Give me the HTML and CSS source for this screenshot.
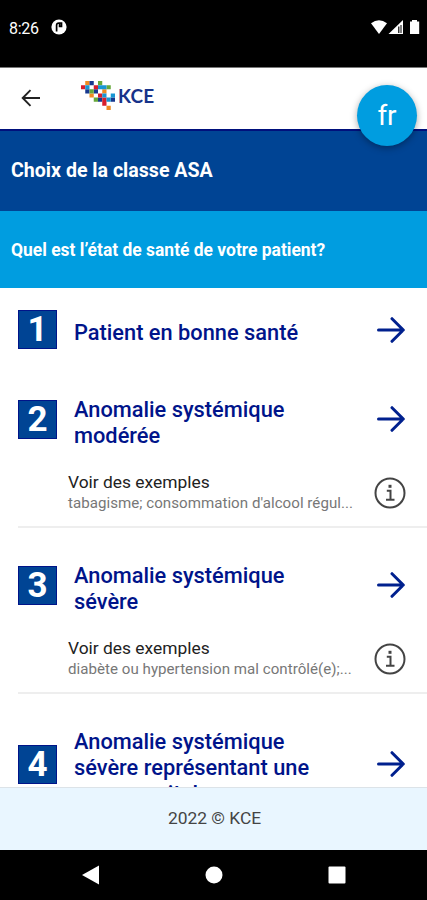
FILE: index.html
```html
<!DOCTYPE html>
<html lang="fr">
<head>
<meta charset="utf-8">
<title>KCE</title>
<link rel="stylesheet" href="styles.css">
</head>
<body>
<div class="status">
  <span class="time">8:26</span>
  <svg class="notif" width="16" height="16" viewBox="0 0 16 16"><circle cx="8" cy="8" r="7.600" fill="#fff"/><path d="M5.600 12.500V6.200Q5.600 4 8 4H10.500V7.300H8.600V3.500" fill="none" stroke="#000" stroke-width="1.700"/></svg>
  <svg class="signals" width="49" height="15" viewBox="0 0 49 15"><path d="M0 3.200Q8 -2.600 16 3.200L8 14Z" fill="#fff"/><path d="M17.500 14L32 0V14Z" fill="#fff"/><path d="M27.200 6.500h1.200V13h-1.200zM29.500 5h1V13h-1z" fill="#000"/><path d="M41 0h5v1.500h2.200V14H39V1.500h2z" fill="#fff"/></svg>
</div>
<header class="bar">
  <svg class="back" width="20" height="18" viewBox="0 0 20 18"><path d="M19 9H2M9.500 1.200L1.700 9L9.500 16.800" fill="none" stroke="#222" stroke-width="1.900"/></svg>
  <svg class="mosaic" width="34" height="29" viewBox="0 0 8 7" preserveAspectRatio="none">
    <path fill="#ef8b22" d="M1 0h1v1h-1zM5 2h1v1h-1zM2 3h1v1h-1zM6 6h1v1h-1z"/>
    <path fill="#17388f" d="M2 0h1v1h-1zM1 2h1v1h-1zM3 2h1v1h-1zM4 4h1v1h-1zM7 4h1v1h-1z"/>
    <path fill="#66a83a" d="M4 0h1v1h-1zM6 1h1v1h-1zM2 2h1v1h-1zM3 4h1v1h-1z"/>
    <path fill="#d61f2c" d="M0 1h1v1h-1zM3 1h1v1h-1zM4 3h1v1h-1zM5 4h1v1h-1zM5 5h1v1h-1z"/>
    <path fill="#1796d4" d="M1 1h1v1h-1zM4 1h2v1h-2zM5 3h1v1h-1zM7 3h1v1h-1zM6 4h1v1h-1z"/>
  </svg>
  <span class="brand">KCE</span>
  <button class="lang">fr</button>
</header>
<h1 class="title">Choix de la classe ASA</h1>
<h2 class="question">Quel est l’état de santé de votre patient?</h2>
<main class="list">
  <section class="choice single">
    <span class="num">1</span><h3>Patient en bonne santé</h3>
    <svg class="arrow" viewBox="0 0 28 26"><path d="M1.500 13H26M15 1.700L26.300 13L15 24.300"/></svg>
  </section>
  <section class="choice">
    <span class="num">2</span><h3>Anomalie systémique modérée</h3>
    <svg class="arrow" viewBox="0 0 28 26"><path d="M1.500 13H26M15 1.700L26.300 13L15 24.300"/></svg>
  </section>
  <section class="examples">
    <div class="text"><p class="see">Voir des exemples</p><p class="detail">tabagisme; consommation d'alcool régul...</p></div>
    <svg class="info" viewBox="0 0 32 32"><circle cx="16" cy="16" r="14.500"/><path d="M12.800 13.700H16.500V22.500M12 22.800H20.500"/><path class="dot" d="M14.500 7.800h3v3h-3z"/></svg>
  </section>
  <section class="choice">
    <span class="num">3</span><h3>Anomalie systémique sévère</h3>
    <svg class="arrow" viewBox="0 0 28 26"><path d="M1.500 13H26M15 1.700L26.300 13L15 24.300"/></svg>
  </section>
  <section class="examples">
    <div class="text"><p class="see">Voir des exemples</p><p class="detail">diabète ou hypertension mal contrôlé(e);...</p></div>
    <svg class="info" viewBox="0 0 32 32"><circle cx="16" cy="16" r="14.500"/><path d="M12.800 13.700H16.500V22.500M12 22.800H20.500"/><path class="dot" d="M14.500 7.800h3v3h-3z"/></svg>
  </section>
  <section class="choice">
    <span class="num">4</span><h3>Anomalie systémique sévère représentant une menace vitale</h3>
    <svg class="arrow" viewBox="0 0 28 26"><path d="M1.500 13H26M15 1.700L26.300 13L15 24.300"/></svg>
  </section>
</main>
<footer class="foot">2022 © KCE</footer>
<nav class="nav">
  <svg width="17" height="20" viewBox="0 0 17 20"><path d="M0 10L17 .5V19.500Z"/></svg>
  <svg width="18" height="18" viewBox="0 0 18 18"><circle cx="9" cy="9" r="8.500"/></svg>
  <svg width="18" height="18" viewBox="0 0 18 18"><rect x=".5" y=".5" width="17" height="17" rx="1"/></svg>
</nav>
</body>
</html>
```
FILE: styles.css
```css
* { box-sizing: border-box; margin: 0; padding: 0; }
body { width: 427px; height: 900px; overflow: hidden; display: flex; flex-direction: column; background: #fff; font-family: Roboto, sans-serif; }
svg { display: block; flex: none; }
.status { flex: none; height: 68px; background: #000; color: #fff; display: flex; align-items: flex-start; padding: 19px 7px 0 9px; border-bottom: 1px solid #777; }
.time { width: 42px; font-size: 16px; line-height: 20px; letter-spacing: -0.3px; }
.signals { margin: 1px 0 0 auto; }
.bar { position: relative; flex: none; height: 61px; display: flex; align-items: center; padding-left: 21px; }
.back { margin-right: 40px; margin-top: -1px; }
.mosaic { margin-top: -6px; }
.brand { font: 700 19px/22px Lato, sans-serif; color: #17338a; margin: -6px 0 0 3px; letter-spacing: 0.2px; }
.lang { position: absolute; left: 357px; top: 17px; width: 60px; height: 61px; border: 0; border-radius: 50%; background: #009de0; color: #fff; font: 400 28px/60px Roboto, sans-serif; box-shadow: 0 2px 7px rgba(0, 0, 0, 0.35); }
.title { flex: none; height: 82px; border-top: 2px solid #00107c; background: #004494; color: #fff; font-size: 19.600px; font-weight: 700; line-height: 80px; padding-left: 11px; }
.question { flex: none; height: 77px; background: #009de0; color: #fff; font-size: 17.450px; font-weight: 700; line-height: 78px; padding-left: 11px; }
.list { flex: 1; min-height: 0; overflow: hidden; padding-left: 18px; }
.choice { display: flex; align-items: center; padding: 35px 22px 20px 0; }
.num { flex: none; width: 39px; height: 39px; background: #004494; border: 1px solid #001489; color: #fff; font-size: 35px; font-weight: 700; line-height: 38px; text-align: center; margin-top: -8px; }
.choice h3 { width: 260px; margin-left: 17px; color: #00148a; font-size: 21.800px; font-weight: 500; line-height: 26px; }
.arrow { width: 28px; height: 26px; margin: -8px 0 0 auto; fill: none; stroke: #00208e; stroke-width: 3; stroke-linecap: round; stroke-linejoin: round; }
.single { padding: 28px 22px 13px 0; }
.single .num, .single .arrow { margin-top: -6px; }
.single h3 { margin: -10px 0 -10px 17px; }
.examples { display: flex; height: 59px; justify-content: space-between; align-items: flex-start; padding: 1px 21px 0 50px; border-bottom: 2px solid #eee; }
.see { font-size: 17.400px; line-height: 23px; padding-top: 1px; margin-bottom: -1px; color: #222; }
.detail { font-size: 15.100px; line-height: 20px; color: #777; white-space: nowrap; letter-spacing: 0.030px; }
.info { width: 32px; height: 32px; margin-top: 7px; fill: none; stroke: #444; stroke-width: 2; }
.info .dot { fill: #444; stroke: none; }
.foot { flex: none; height: 63px; background: #e9f6ff; border-top: 1px solid #dce3e8; text-align: center; font-size: 17.400px; line-height: 61px; color: #444; padding-left: 2px; }
.nav { flex: none; height: 50px; background: #000; fill: #fff; display: flex; align-items: center; justify-content: space-between; padding: 0 81px 0 82px; }
```
